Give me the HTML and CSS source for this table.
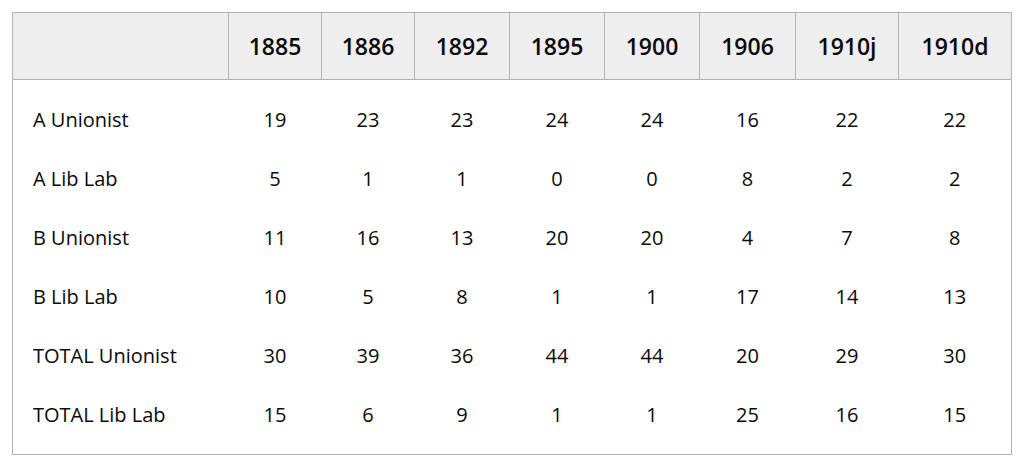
FILE: index.html
```html
<!DOCTYPE html>
<html>
<head>
<meta charset="utf-8">
<link rel="stylesheet" href="styles.css">
</head>
<body>
<table class="results">
  <colgroup>
    <col class="c-label">
    <col class="c-93"><col class="c-93">
    <col class="c-95"><col class="c-95"><col class="c-95">
    <col class="c-96"><col class="c-103"><col class="c-113">
  </colgroup>
  <thead>
    <tr>
      <th></th><th>1885</th><th>1886</th><th>1892</th><th>1895</th><th>1900</th><th>1906</th><th>1910j</th><th>1910d</th>
    </tr>
  </thead>
  <tbody>
    <tr><td>A Unionist</td><td>19</td><td>23</td><td>23</td><td>24</td><td>24</td><td>16</td><td>22</td><td>22</td></tr>
    <tr><td>A Lib Lab</td><td>5</td><td>1</td><td>1</td><td>0</td><td>0</td><td>8</td><td>2</td><td>2</td></tr>
    <tr><td>B Unionist</td><td>11</td><td>16</td><td>13</td><td>20</td><td>20</td><td>4</td><td>7</td><td>8</td></tr>
    <tr><td>B Lib Lab</td><td>10</td><td>5</td><td>8</td><td>1</td><td>1</td><td>17</td><td>14</td><td>13</td></tr>
    <tr><td>TOTAL Unionist</td><td>30</td><td>39</td><td>36</td><td>44</td><td>44</td><td>20</td><td>29</td><td>30</td></tr>
    <tr><td>TOTAL Lib Lab</td><td>15</td><td>6</td><td>9</td><td>1</td><td>1</td><td>25</td><td>16</td><td>15</td></tr>
  </tbody>
</table>
</body>
</html>
```
FILE: styles.css
```css
html, body {
  margin: 0;
  background: #ffffff;
}
body {
  padding: 12px;
  font-family: "Open Sans", "Liberation Sans", sans-serif;
  color: #0a0a0a;
}
.results {
  width: 1000px;
  table-layout: fixed;
  border-collapse: collapse;
  border: 1px solid #b3b3b3;
}
.c-label { width: 216px; }
.c-93 { width: 93px; }
.c-95 { width: 95px; }
.c-96 { width: 96px; }
.c-103 { width: 103px; }
.c-113 { width: 113px; }
.results th {
  height: 66px;
  padding: 0;
  background: #eeeeee;
  border: 1px solid #b3b3b3;
  font-size: 23px;
  font-weight: 600;
  text-align: center;
  vertical-align: middle;
}
.results td {
  height: 59px;
  padding: 0;
  font-size: 20px;
  text-align: center;
  vertical-align: middle;
}
.results td:first-child {
  text-align: left;
  padding-left: 20px;
}
.results tbody tr:first-child td {
  padding-top: 10px;
}
.results tbody tr:last-child td {
  padding-bottom: 10px;
}
```
